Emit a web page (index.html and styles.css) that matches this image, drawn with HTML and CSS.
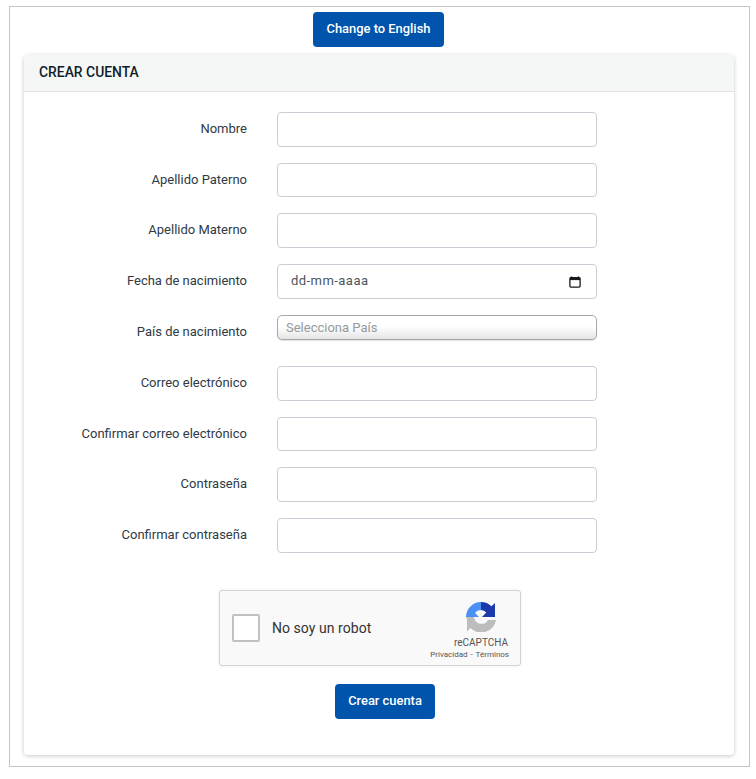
FILE: index.html
```html
<!DOCTYPE html>
<html lang="es">
<head>
<meta charset="utf-8">
<title>Crear cuenta</title>
<link rel="stylesheet" href="styles.css">
</head>
<body>
<div class="frame">
  <div class="lang"><button class="btn btn-lang" type="button">Change to English</button></div>
  <section class="card">
    <header class="card-head">CREAR CUENTA</header>
    <form class="card-body">
      <div class="row"><label>Nombre</label><input class="field" type="text"></div>
      <div class="row"><label>Apellido Paterno</label><input class="field" type="text"></div>
      <div class="row"><label>Apellido Materno</label><input class="field" type="text"></div>
      <div class="row"><label>Fecha de nacimiento</label>
        <div class="field date"><span>dd-mm-aaaa</span>
          <svg class="cal" viewBox="0 0 12 12" width="12" height="12"><path d="M2.5 0.5V2M9.5 0.5V2" stroke="#1a1a1a" stroke-width="1.4" fill="none"/><rect x="0.9" y="1.7" width="10.2" height="9.4" rx="1" fill="none" stroke="#1a1a1a" stroke-width="1.3"/><rect x="0.9" y="1.7" width="10.2" height="2.4" fill="#1a1a1a"/></svg>
        </div>
      </div>
      <div class="row row-select"><label>País de nacimiento</label><div class="select">Selecciona País</div></div>
      <div class="row"><label>Correo electrónico</label><input class="field" type="text"></div>
      <div class="row"><label>Confirmar correo electrónico</label><input class="field" type="text"></div>
      <div class="row"><label>Contraseña</label><input class="field" type="password"></div>
      <div class="row"><label>Confirmar contraseña</label><input class="field" type="password"></div>
      <div class="captcha">
        <span class="check"></span>
        <span class="robot">No soy un robot</span>
        <div class="brand">
          <svg class="logo" viewBox="0 0 30 30" width="30" height="30">
            <path d="M15 0 V8 A7.5 7.5 0 0 0 9 11 L13 15 H0 A15 15 0 0 1 15 0 Z" fill="#4a90f5"/>
            <path d="M15 0 A15 15 0 0 1 25.5 4.3 L29 1 V15 H16 L20.3 10.5 A7.5 7.5 0 0 0 15 8 Z" fill="#1c3aa9"/>
            <path d="M0 15 H8 A7.5 7.5 0 0 0 22 18 L30 18 A15 15 0 0 1 4.5 26 L1 29.5 V17 Z" fill="#bdbdbd"/>
          </svg>
          <div class="brand-name">reCAPTCHA</div>
          <div class="brand-links">Privacidad - Términos</div>
        </div>
      </div>
      <div class="submit"><button class="btn" type="button">Crear cuenta</button></div>
    </form>
  </section>
</div>
</body>
</html>
```
FILE: styles.css
```css
* { box-sizing: border-box; }
html, body { margin: 0; padding: 0; background: #fff; }
body { font-family: Roboto, sans-serif; font-size: 13px; color: #212b36; padding: 6px 6px 0 9px; height: 779px; overflow: hidden; }
.frame { width: 741px; height: 761px; border: 1px solid #c4c4c4; padding: 5px 15px 0 14px; }
.lang { display: flex; justify-content: center; margin-bottom: 8px; padding-right: 1px; }
.btn { font-family: Roboto, sans-serif; font-size: 12.9px; font-weight: 500; color: #fff; background: #0054ab; border: 0; border-radius: 4px; height: 35px; padding: 0 13.3px 2px; }
.card { height: 700px; border-radius: 4px; box-shadow: 0 1px 4px rgba(0,0,0,.22); background: #fff; }
.card-head { height: 37px; padding: 0 15px 2px; display: flex; align-items: center; background: #f5f7f7; border-bottom: 1px solid #dfe3e8; border-radius: 4px 4px 0 0; font-size: 13.9px; font-weight: 500; color: #0f1c2c; }
.card-body { padding: 19.8px 0 0; }
.row { display: grid; grid-template-columns: 223px 320px; column-gap: 30px; align-items: center; height: 34.8px; margin-bottom: 16px; }
.row label { text-align: right; color: #2f3a45; padding-bottom: 1.7px; }
.field { display: block; width: 320px; height: 34.8px; border: 1px solid #c9ced6; border-radius: 4px; background: #fff; outline: 0; padding: 0 13px; font: 13px Roboto, sans-serif; }
.date { display: flex; align-items: center; justify-content: space-between; color: #4a5560; padding-right: 15px; letter-spacing: .45px; }
.date span { padding-bottom: 3px; }
.cal { display: block; }
.select { align-self: start; width: 320px; height: 25px; border: 1px solid #a8a8a8; border-radius: 5px; padding: 0 8px; line-height: 23px; color: #97999c; background: linear-gradient(#fff 0, #fff 45%, #ececec 85%, #e4e4e4 100%); box-shadow: 0 1px 1px rgba(0,0,0,.12); }
.captcha { width: 302px; height: 76px; margin: 37px 0 0 195px; border: 1px solid #d3d3d3; border-radius: 3px; background: #f9f9f9; box-shadow: 0 0 3px rgba(0,0,0,.08); display: flex; align-items: center; padding-left: 12px; position: relative; }
.check { width: 28px; height: 28px; border: 2px solid #c1c1c1; border-radius: 2px; background: #fff; flex: none; }
.robot { margin-left: 12px; font-size: 14px; color: #333; letter-spacing: .05px; }
.brand { position: absolute; right: 11px; top: 11px; width: 80px; display: flex; flex-direction: column; align-items: flex-end; }
.logo { display: block; margin-right: 13px; }
.brand-name { font-size: 10px; color: #555; margin: 5px 1px 0 0; line-height: 12px; }
.brand-links { font-size: 8px; word-spacing: 1px; color: #555; line-height: 10px; margin-top: 1px; white-space: nowrap; }
.submit { width: 100px; margin: 18px 0 0 311px; }
.submit .btn { width: 100px; padding: 0 0 2px; }
```
